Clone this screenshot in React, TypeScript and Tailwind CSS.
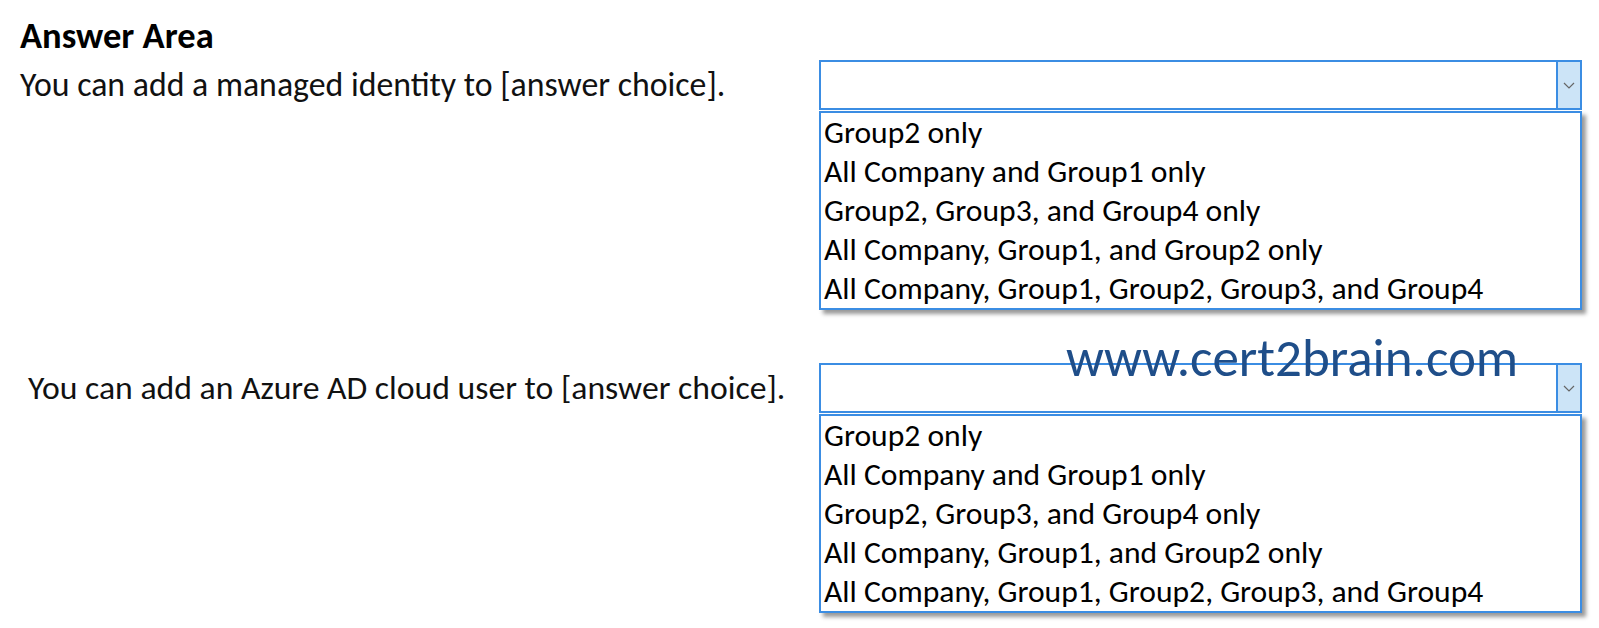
import React from 'react'

const choices = [
  'Group2 only',
  'All Company and Group1 only',
  'Group2, Group3, and Group4 only',
  'All Company, Group1, and Group2 only',
  'All Company, Group1, Group2, Group3, and Group4',
]

const font = "font-['Carlito','Liberation_Sans_Narrow','Open_Sans',sans-serif]"

function Chevron() {
  return (
    <svg width="12" height="7" viewBox="0 0 12 7" fill="none">
      <path d="M1 1l5 5 5-5" stroke="#666" strokeWidth="1.2" />
    </svg>
  )
}

function Dropdown() {
  return (
    <div className="w-[763px]">
      <div className="h-[50px] border-2 border-[#3b8de3] flex bg-white">
        <div className="flex-1" />
        <div className="w-[24px] border-l-2 border-[#3b8de3] bg-[#cce4f7] flex items-center justify-center">
          <Chevron />
        </div>
      </div>
      <ul className="mt-px border-2 border-[#3b8de3] bg-white shadow-[4px_4px_4px_rgba(0,0,0,0.4)]">
        {choices.map((c) => (
          <li key={c} className="h-[39px] leading-[39px] pl-[3px] text-[31.6px] text-black whitespace-nowrap">
            {c}
          </li>
        ))}
      </ul>
    </div>
  )
}

export default function App() {
  return (
    <div className={`relative w-[1599px] h-[628px] bg-white overflow-hidden ${font}`}>
      <h1 className="pt-[16px] pl-[20px] h-[56px] leading-[40px] text-[36.5px] font-bold text-black">
        Answer Area
      </h1>

      <div className="mt-[4px] flex items-start">
        <p className="w-[819px] pl-[20px] leading-[50px] text-[33.8px] text-[#111]">
          You can add a managed identity to [answer choice].
        </p>
        <Dropdown />
      </div>

      <div className="mt-[53px] flex items-start">
        <p className="w-[819px] pl-[28px] leading-[50px] text-[33.7px] text-[#111]">
          You can add an Azure AD cloud user to [answer choice].
        </p>
        <Dropdown />
      </div>

      <div className="absolute left-[1066px] top-[328px] text-[53px] leading-[60px] text-[#1f4e89]">
        www.cert2brain.com
      </div>
    </div>
  )
}
